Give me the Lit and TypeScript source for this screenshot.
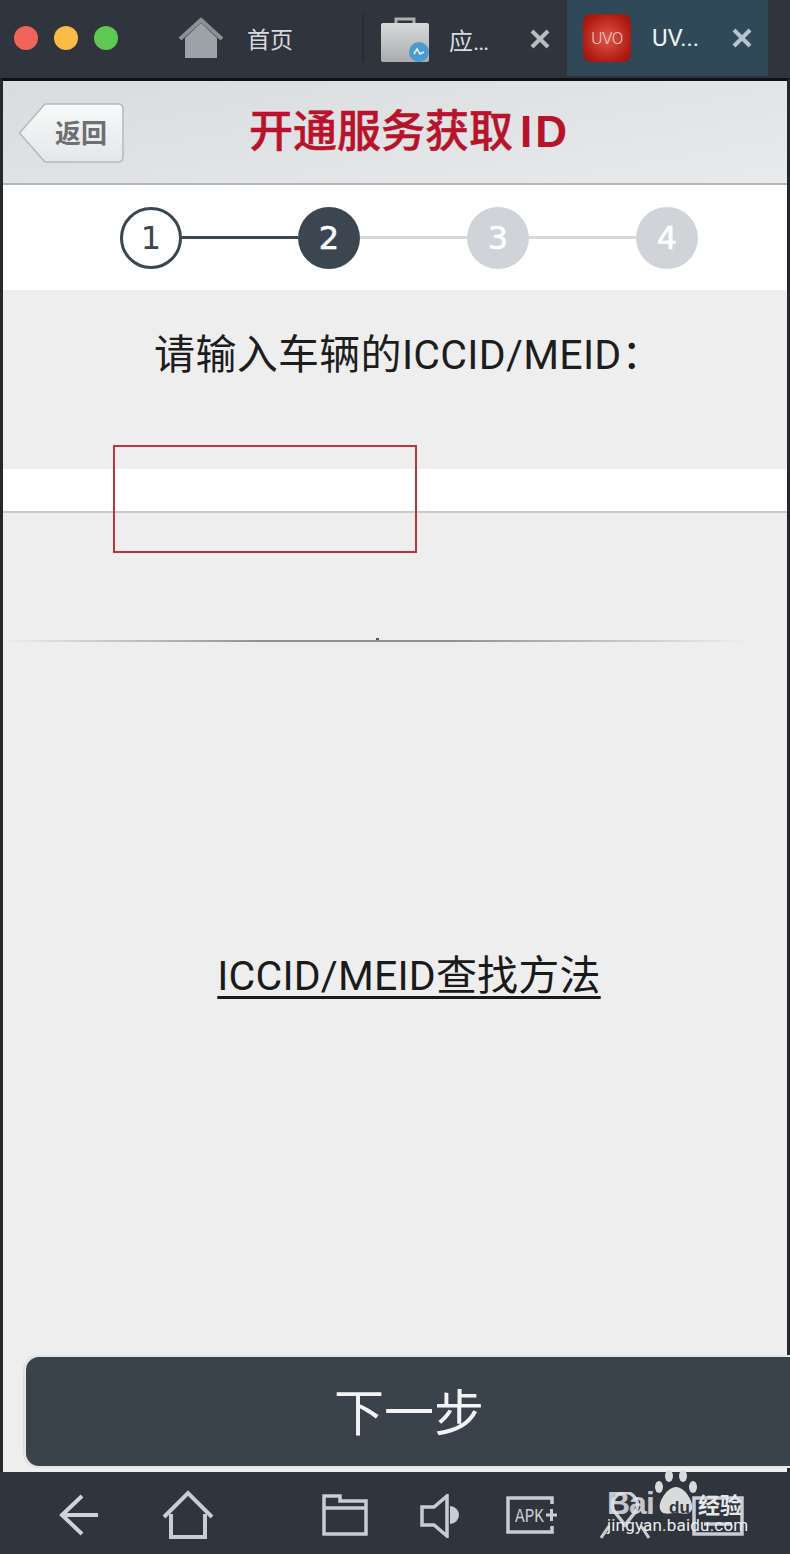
import { LitElement, html, css } from "lit";
import { customElement } from "lit/decorators.js";

@customElement("app-root")
export class AppRoot extends LitElement {
  static styles = css`
    :host { display: block; width: 790px; height: 1554px; position: relative; overflow: hidden; background: #2f343d; font-family: Roboto, "Noto Sans CJK SC", sans-serif; }
    * { box-sizing: border-box; }
    .page { display: flex; flex-direction: column; height: 100%; }

    .tabbar { height: 78px; flex: none; display: flex; align-items: stretch; background: #2f343d; color: #d8dade; }
    .dots { display: flex; gap: 16px; padding: 26px 0 0 14px; width: 178px; flex: none; }
    .dot { width: 24px; height: 24px; border-radius: 50%; }
    .red { background: #f2645a; } .yellow { background: #f9bd45; } .green { background: #5ec853; }
    .home-tab { width: 186px; flex: none; display: flex; align-items: center; border-right: 2px solid #262a31; margin: 14px 0 16px; }
    .home-tab span { margin-left: 23px; font-size: 23px; }
    .app-tab { width: 203px; flex: none; display: flex; align-items: center; padding: 0 0 0 17px; position: relative; }
    .app-tab .label { margin-left: 20px; font-size: 24px; width: 74px; }
    .app-tab .x { width: 22px; height: 22px; margin-left: 6px; }
    .active { background: #304959; width: 201px; padding-left: 16px; height: 76px; color: #eef3f5; }
    .active .label { margin-left: 21px; width: 73px; letter-spacing: 0; }
    .logo { width: 48px; height: 48px; flex: none; border-radius: 8px; background: radial-gradient(circle at 50% 50%, #e4564a, #b01d14 70%, #8e140f); display: flex; align-items: center; justify-content: center; color: #f7d3ce; font-size: 17px; font-weight: 300; letter-spacing: -0.5px; }

    .screen { flex: 1; display: flex; flex-direction: column; border-top: 3px solid #101114; margin: 0; border-left: 3px solid #26282c; border-right: 3px solid #26282c; min-height: 0; background: #eeeeef; }
    .header { height: 104px; flex: none; display: flex; align-items: center; background: linear-gradient(170deg, #d9dcde, #e8eaec); border-bottom: 2px solid #b2b5b9; position: relative; }
    .back { position: relative; width: 106px; height: 61px; margin: 2px 0 0 15px; flex: none; display: flex; align-items: center; justify-content: flex-end; padding-right: 17px; color: #6d7073; font-size: 26px; font-weight: 700; }
    .back svg { position: absolute; inset: 0; }
    .back span { position: relative; top: -2px; }
    .title { margin-left: 125px; color: #b8132a; font-size: 44px; font-weight: 500; -webkit-text-stroke: 0.5px #b8132a; line-height: 1; white-space: nowrap; }
    .title i { font-style: normal; font-weight: 700; letter-spacing: 3px; margin-left: 7px; font-family: "Liberation Sans", sans-serif; -webkit-text-stroke: 0; }

    .stepper { height: 105px; flex: none; background: #fff; display: flex; align-items: center; padding: 0 0 0 117px; }
    .step { width: 62px; height: 62px; border-radius: 50%; flex: none; display: flex; align-items: center; justify-content: center; font-size: 32px; font-family: "DejaVu Sans", sans-serif; }
    .step.done { border: 3px solid #3b4650; color: #3b4650; background: #fff; }
    .step.now { background: #3b4650; color: #fff; -webkit-text-stroke: 0.6px #fff; }
    .step.todo { background: #d0d3d7; color: #fff; -webkit-text-stroke: 0.6px #fff; }
    .line { height: 3px; flex: none; background: #d8d9db; width: 107px; }
    .line.on { background: #3b4650; width: 116px; }

    .content { flex: 1; display: flex; flex-direction: column; min-height: 0; }
    .ask { margin: 36px 0 0; text-align: center; font-size: 41px; line-height: 58px; letter-spacing: 0.3px; color: #1d1d1d; height: 58px; white-space: nowrap; padding-left: 27px; }
    .field { margin-top: 85px; height: 44px; background: #fff; border-bottom: 2px solid #c9cacb; flex: none; }
    .rule { margin-top: 127px; height: 2px; flex: none; margin-right: 40px; position: relative; background: linear-gradient(90deg, transparent, #8f9092 35%, #8f9092 60%, transparent); }
    .rule::after { content: ""; position: absolute; left: 373px; top: -2px; width: 3px; height: 2px; background: #555; }
    .link { margin-top: 305px; text-align: center; font-size: 41px; line-height: 58px; height: 60px; letter-spacing: 0.2px; color: #1a1a1a; text-decoration: underline; text-underline-offset: 6px; text-decoration-thickness: 3px; padding-left: 28px; white-space: nowrap; }
    .spacer { flex: 1; }
    .next { margin: 0 -3px 4px 21px; height: 113px; flex: none; background: #3a424c; border-radius: 15px 0 0 15px; border: 2px solid #e4e5e6; border-right: none; display: flex; align-items: center; justify-content: center; color: #f2f3f4; font-size: 50px; padding: 0 0 6px 2px; box-shadow: -1px 0 0 #dcdddf; }

    .navbar { height: 82px; flex: none; display: flex; align-items: flex-start; background: #2f343d; padding: 18px 0 0 58px; }
    .navbar svg { flex: none; display: block; }
    .n-back { width: 42px; height: 44px; margin-top: 3px; }
    .n-home { width: 52px; height: 50px; margin-left: 62px; }
    .n-folder { width: 46px; height: 42px; margin-left: 108px; margin-top: 4px; }
    .n-sound { width: 40px; height: 44px; margin-left: 52px; margin-top: 4px; }
    .n-apk { width: 52px; height: 38px; margin-left: 46px; margin-top: 6px; }
    .n-gps { width: 50px; height: 48px; margin-left: 42px; margin-top: 2px; }
    .n-kbd { width: 52px; height: 40px; margin-left: 42px; margin-top: 6px; }

    .annot { position: absolute; left: 113px; top: 445px; width: 304px; height: 108px; border: 2px solid #c4303b; pointer-events: none; }

    .mark { position: absolute; left: 604px; top: 1468px; width: 150px; height: 78px; pointer-events: none; }
    .mark svg { position: absolute; left: 50px; top: 1px; }
    .mark .bai { position: absolute; left: 3px; top: 17px; font: 700 32px/36px "Liberation Sans", sans-serif; letter-spacing: -1px; color: rgba(225,226,228,0.85); }
    .mark .du { position: absolute; left: 65px; top: 31px; font: 700 17px/18px "Liberation Sans", sans-serif; color: #2f343d; }
    .mark .jy { position: absolute; left: 94px; top: 20px; font: 700 22px/30px "Noto Sans CJK SC", sans-serif; color: #e6e7e9; }
    .mark .url { position: absolute; left: 3px; top: 45px; font: 400 17px/24px Roboto, sans-serif; color: #eceded; white-space: nowrap; letter-spacing: 0.2px; }
  `;

  render() {
    return html`
      <div class="page">
        <div class="tabbar">
          <div class="dots"><div class="dot red"></div><div class="dot yellow"></div><div class="dot green"></div></div>
          <div class="home-tab">
            <svg width="46" height="42" viewBox="0 0 46 42">
              <path d="M7 21 L23 6 L39 21 V41 H7 Z" fill="#9da1a8"/>
              <path d="M2 22 L23 3 L44 22" fill="none" stroke="#8b8f96" stroke-width="4"/>
            </svg>
            <span>首页</span>
          </div>
          <div class="app-tab">
            <svg width="48" height="46" viewBox="0 0 48 46">
              <defs><linearGradient id="bag" x1="0" y1="0" x2="0" y2="1"><stop offset="0" stop-color="#d8d9da"/><stop offset="1" stop-color="#a9abad"/></linearGradient></defs>
              <path d="M15 8 V3 H33 V8" fill="none" stroke="#aeb0b2" stroke-width="3"/>
              <rect x="0" y="7" width="48" height="39" rx="2" fill="url(#bag)"/>
              <circle cx="38" cy="36" r="10" fill="#4b9bd0"/>
              <path d="M33 38 L36 33 L39 38 L43 36" fill="none" stroke="#e6f1f8" stroke-width="1.5"/>
            </svg>
            <span class="label">应…</span>
            <svg class="x" viewBox="0 0 22 22"><path d="M3 3 L19 19 M19 3 L3 19" stroke="#b9bcc1" stroke-width="4"/></svg>
          </div>
          <div class="app-tab active">
            <div class="logo">UVO</div>
            <span class="label">UV...</span>
            <svg class="x" viewBox="0 0 22 22"><path d="M3 3 L19 19 M19 3 L3 19" stroke="#b9c3ca" stroke-width="4"/></svg>
          </div>
        </div>

        <div class="screen">
          <div class="header">
            <div class="back">
              <svg width="106" height="61" viewBox="0 0 106 61">
                <defs><linearGradient id="bk" x1="0" y1="0" x2="0" y2="1"><stop offset="0" stop-color="#f8f9f9"/><stop offset="1" stop-color="#e4e6e8"/></linearGradient></defs>
                <path d="M1.5 30 L27 1 H100 Q105 1 105 6 V54 Q105 59 100 59 H27 Z" fill="url(#bk)" stroke="#b6b9bc" stroke-width="1.5"/>
              </svg>
              <span>返回</span>
            </div>
            <div class="title">开通服务获取<i>ID</i></div>
          </div>

          <div class="stepper">
            <div class="step done">1</div><div class="line on"></div>
            <div class="step now">2</div><div class="line"></div>
            <div class="step todo">3</div><div class="line"></div>
            <div class="step todo">4</div>
          </div>

          <div class="content">
            <div class="ask">请输入车辆的ICCID/MEID：</div>
            <div class="field"></div>
            <div class="rule"></div>
            <div class="link">ICCID/MEID查找方法</div>
            <div class="spacer"></div>
            <div class="next">下一步</div>
          </div>
        </div>

        <div class="navbar">
          <svg class="n-back" viewBox="0 0 42 44"><path d="M24 3 L4 22 L24 41 M4 22 H40" fill="none" stroke="#cfd2d8" stroke-width="4"/></svg>
          <svg class="n-home" viewBox="0 0 52 50"><path d="M2 27 L26 3 L50 27 M9 24 V47 H43 V24" fill="none" stroke="#c8ccd6" stroke-width="4"/></svg>
          <svg class="n-folder" viewBox="0 0 46 42"><path d="M2 40 V2 H18 V7 H44 V40 Z M2 14 H44" fill="none" stroke="#c8ccd6" stroke-width="3.5"/></svg>
          <svg class="n-sound" viewBox="0 0 40 44"><path d="M2 13 H14 L27 2 V42 L14 31 H2 Z" fill="none" stroke="#c8ccd6" stroke-width="3.5"/><path d="M30 12 A9 9 0 0 1 30 30 Z" fill="#c8ccd6"/></svg>
          <svg class="n-apk" viewBox="0 0 52 38">
            <path d="M46 8 V2 H2 V36 H46 V30" fill="none" stroke="#c8ccd6" stroke-width="3.5"/>
            <text x="9" y="26" font-family="Liberation Mono, monospace" font-size="21" textLength="29" lengthAdjust="spacingAndGlyphs" fill="#c8ccd6">APK</text>
            <path d="M40 19 H51 M45.5 13 V25" stroke="#c8ccd6" stroke-width="3"/>
          </svg>
          <svg class="n-gps" viewBox="0 0 50 48">
            <path d="M25 33 L14 19 A12.5 12.5 0 1 1 36 19 Z" fill="none" stroke="#c8ccd6" stroke-width="3.5"/>
            <path d="M1 46 L9 34 M41 34 L49 46" stroke="#c8ccd6" stroke-width="3"/>
          </svg>
          <svg class="n-kbd" viewBox="0 0 52 40"><path d="M2 2 H50 V38 H2 Z M12 28 H40" fill="none" stroke="#c8ccd6" stroke-width="3.5"/></svg>
        </div>
      </div>

      <div class="annot"></div>

      <div class="mark">
        <svg width="44" height="48" viewBox="0 0 44 48" fill="#d9dadc">
          <ellipse cx="5" cy="18" rx="4" ry="6"/>
          <ellipse cx="15" cy="7" rx="4" ry="6"/>
          <ellipse cx="29" cy="7" rx="4" ry="6"/>
          <ellipse cx="39" cy="18" rx="4" ry="6"/>
          <path d="M22 18 C31 18 40 33 38 40 C36 47 28 44 22 44 C16 44 8 47 6 40 C4 33 13 18 22 18 Z"/>
        </svg>
        <span class="bai">Bai</span>
        <span class="du">du</span>
        <span class="jy">经验</span>
        <span class="url">jingyan.baidu.com</span>
      </div>
    `;
  }
}
